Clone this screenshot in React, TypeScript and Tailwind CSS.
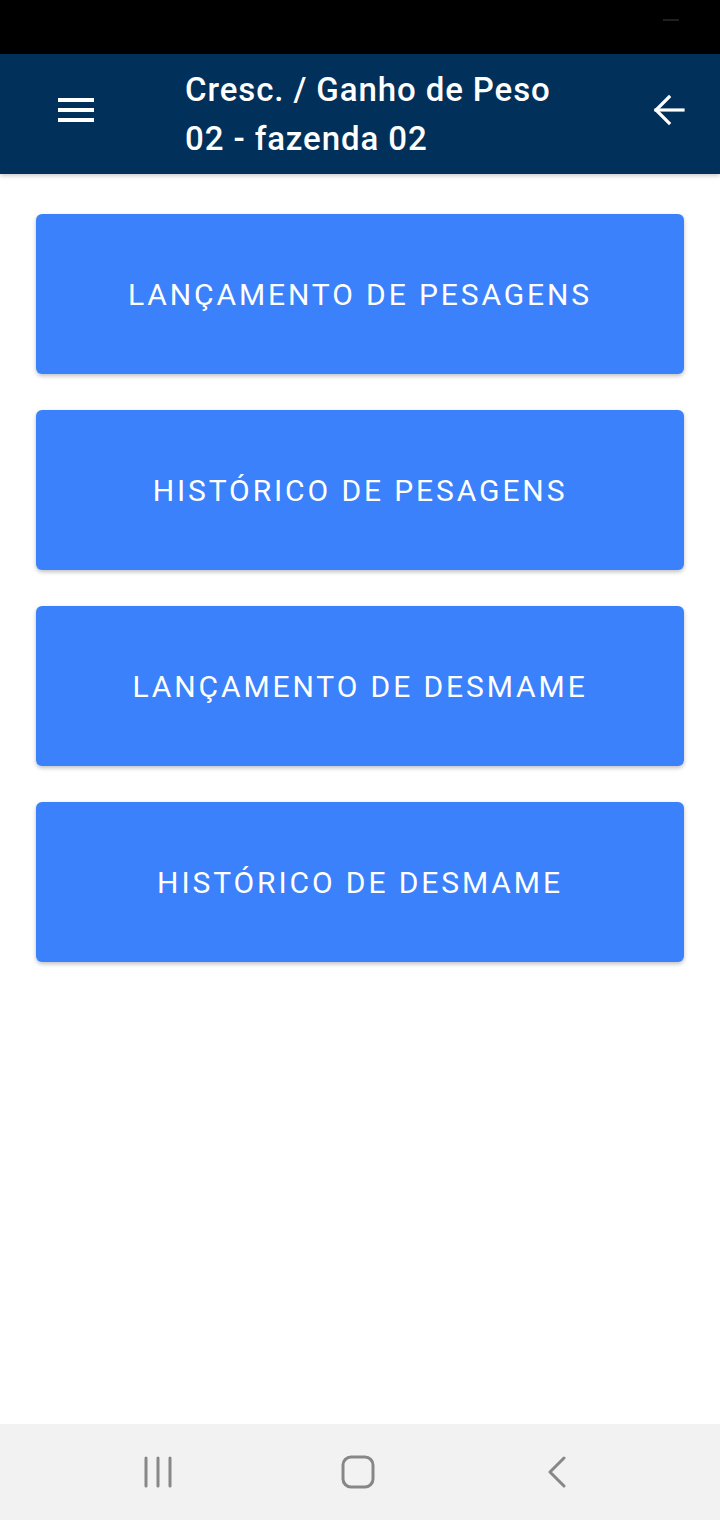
import React from "react";

const ITEMS = [
  "LANÇAMENTO DE PESAGENS",
  "HISTÓRICO DE PESAGENS",
  "LANÇAMENTO DE DESMAME",
  "HISTÓRICO DE DESMAME",
];

export default function App() {
  return (
    <div className="w-[720px] h-[1520px] flex flex-col bg-white font-['Roboto',sans-serif] overflow-hidden">
      {/* Status bar */}
      <div className="h-[54px] bg-black flex justify-end pr-[41px] pt-[19px] shrink-0">
        <div className="w-[16px] h-[2px] bg-[#1f1f1f]" />
      </div>

      {/* Toolbar */}
      <div className="h-[120px] bg-[#01305a] flex items-center shrink-0 shadow-[0_2px_4px_rgba(0,0,0,0.2)] relative z-10">
        <div className="w-[185px] pl-[58px] flex items-center mb-[8px]">
          <svg width="36" height="24" viewBox="0 0 36 24">
            <rect x="0" y="0" width="36" height="4" fill="white" />
            <rect x="0" y="10" width="36" height="4" fill="white" />
            <rect x="0" y="20" width="36" height="4" fill="white" />
          </svg>
        </div>
        <div className="flex-1 text-white text-[33px] font-[500] leading-[49px] tracking-[0.9px]">
          <div>Cresc. / Ganho de Peso</div>
          <div>02 - fazenda 02</div>
        </div>
        <div className="pr-[35px] flex items-center mb-[8px]">
          <svg width="32" height="32" viewBox="0 0 32 32" fill="none" stroke="white" strokeWidth="3.2" strokeLinecap="square">
            <path d="M30 16H3" />
            <path d="M16 3L3 16l13 13" />
          </svg>
        </div>
      </div>

      {/* Menu buttons */}
      <div className="flex-1 flex flex-col gap-[36px] px-[36px] pt-[40px]">
        {ITEMS.map((label) => (
          <button
            key={label}
            className="h-[160px] w-full rounded-[6px] bg-[#3a81fb] text-white text-[30px] font-normal tracking-[2.9px] flex items-center justify-center shadow-[0_2px_4px_rgba(0,0,0,0.25)]"
          >
            {label}
          </button>
        ))}
      </div>

      {/* Android navigation bar */}
      <div className="h-[96px] bg-[#f2f2f2] flex items-center shrink-0">
        <div className="flex-1 flex justify-center pl-[60px]">
          <svg width="30" height="32" viewBox="0 0 30 32" fill="none" stroke="#878787" strokeWidth="3" strokeLinecap="round">
            <path d="M2 2v28M14 2v28M26 2v28" />
          </svg>
        </div>
        <div className="flex-1 flex justify-center">
          <svg width="34" height="34" viewBox="0 0 34 34" fill="none" stroke="#878787" strokeWidth="3">
            <rect x="2" y="2" width="30" height="30" rx="8" />
          </svg>
        </div>
        <div className="flex-1 flex justify-center pr-[64px]">
          <svg width="20" height="32" viewBox="0 0 20 32" fill="none" stroke="#878787" strokeWidth="3" strokeLinecap="round" strokeLinejoin="round">
            <path d="M17 2L3 16l14 14" />
          </svg>
        </div>
      </div>
    </div>
  );
}
